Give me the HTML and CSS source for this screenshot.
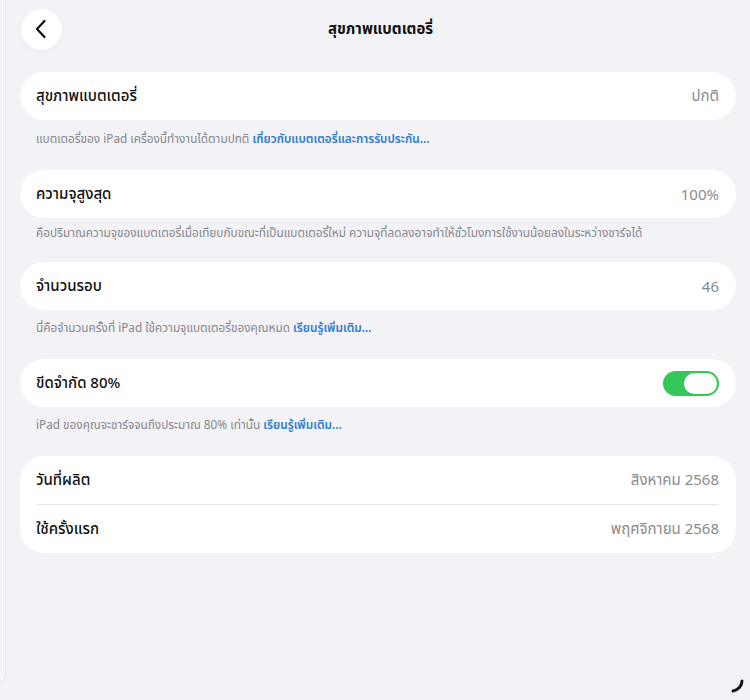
FILE: index.html
```html
<!DOCTYPE html>
<html lang="th">
<head>
<meta charset="utf-8">
<link rel="stylesheet" href="styles.css">
</head>
<body>
<div class="app">
  <div class="sidebar"></div>
  <main class="main">
    <header class="topbar">
      <button class="back" aria-label="Back">
        <svg width="12" height="20" viewBox="0 0 12 20"><path d="M9.5 2 L2 10 L9.5 18" fill="none" stroke="#111" stroke-width="2.2" stroke-linecap="round" stroke-linejoin="round"/></svg>
      </button>
      <h1 class="title">สุขภาพแบตเตอรี่</h1>
      <div class="spacer"></div>
    </header>

    <section class="group g1">
      <div class="card">
        <div class="row"><span class="label">สุขภาพแบตเตอรี่</span><span class="value">ปกติ</span></div>
      </div>
      <p class="note">แบตเตอรี่ของ iPad เครื่องนี้ทำงานได้ตามปกติ <a class="link">เกี่ยวกับแบตเตอรี่และการรับประกัน...</a></p>
    </section>

    <section class="group g2">
      <div class="card">
        <div class="row"><span class="label">ความจุสูงสุด</span><span class="value">100%</span></div>
      </div>
      <p class="note">คือปริมาณความจุของแบตเตอรี่เมื่อเทียบกับขณะที่เป็นแบตเตอรี่ใหม่ ความจุที่ลดลงอาจทำให้ชั่วโมงการใช้งานน้อยลงในระหว่างชาร์จได้</p>
    </section>

    <section class="group g3">
      <div class="card">
        <div class="row"><span class="label">จำนวนรอบ</span><span class="value">46</span></div>
      </div>
      <p class="note">นี่คือจำนวนครั้งที่ iPad ใช้ความจุแบตเตอรี่ของคุณหมด <a class="link">เรียนรู้เพิ่มเติม...</a></p>
    </section>

    <section class="group">
      <div class="card">
        <div class="row"><span class="label">ขีดจำกัด 80%</span><span class="toggle"><span class="knob"></span></span></div>
      </div>
      <p class="note">iPad ของคุณจะชาร์จจนถึงประมาณ 80% เท่านั้น <a class="link">เรียนรู้เพิ่มเติม...</a></p>
    </section>

    <section class="group">
      <div class="card list">
        <div class="row"><span class="label">วันที่ผลิต</span><span class="value">สิงหาคม 2568</span></div>
        <div class="sep"></div>
        <div class="row"><span class="label">ใช้ครั้งแรก</span><span class="value">พฤศจิกายน 2568</span></div>
      </div>
    </section>
  </main>
  <svg class="corner" width="16" height="16" viewBox="0 0 16 16"><path d="M12 3 C12 8 8 12 3 13" fill="none" stroke="#111" stroke-width="3" stroke-linecap="round"/></svg>
</div>
</body>
</html>
```
FILE: styles.css
```css
* { box-sizing: border-box; }
html, body { margin: 0; padding: 0; }
body {
  width: 750px;
  height: 700px;
  overflow: hidden;
  background: #f2f2f7;
  font-family: "Noto Sans", "Noto Sans Thai", "DejaVu Sans", sans-serif;
  color: #111;
}
.app {
  position: relative;
  display: flex;
  height: 700px;
}
.sidebar {
  width: 6px;
  height: 682px;
  background: #f6f6fa;
  border-right: 1px solid #e6e6ec;
  border-bottom: 1px solid #e6e6ec;
  border-bottom-right-radius: 14px;
  flex: none;
}
.main {
  flex: 1;
  padding: 0 14px;
}
.topbar {
  height: 56px;
  display: flex;
  align-items: center;
  justify-content: space-between;
  padding-top: 2px;
}
.back {
  width: 41px;
  height: 41px;
  border-radius: 50%;
  border: none;
  background: #fff;
  display: flex;
  align-items: center;
  justify-content: center;
  padding: 0 2px 0 0;
  margin-left: 1px;
  box-shadow: 0 1px 4px rgba(0,0,0,0.04);
}
.title {
  margin: 0;
  font-size: 15px;
  font-weight: 700;
  color: #111;
  transform: translateX(2px);
}
.spacer { width: 41px; }
.group { margin-top: 24px; }
.g1 { margin-top: 16px; }
.g3 { margin-top: 22px; }
.card {
  background: #fff;
  border-radius: 24px;
  padding: 0 17px 0 16px;
}
.row {
  height: 48px;
  display: flex;
  align-items: center;
  justify-content: space-between;
}
.label { font-size: 15px; font-weight: 500; color: #111; }
.value { font-size: 15px; color: #8a8a8e; }
.sep { height: 1px; background: #e8e8ec; }
.note {
  margin: 9px 0 0 16px;
  font-size: 11.8px;
  line-height: 16px;
  color: #86868b;
  white-space: nowrap;
}
.g1 .note { margin-top: 10px; }
.g2 .note { margin-top: 6px; }
.link { color: #2f7bd0; font-weight: 600; }
.toggle {
  width: 56px;
  height: 25px;
  border-radius: 13px;
  background: #34c759;
  display: flex;
  align-items: center;
  justify-content: flex-end;
  padding: 2px;
}
.knob {
  width: 33px;
  height: 21px;
  border-radius: 11px;
  background: #fff;
}
.corner {
  position: absolute;
  right: 4px;
  bottom: 6px;
}
```
